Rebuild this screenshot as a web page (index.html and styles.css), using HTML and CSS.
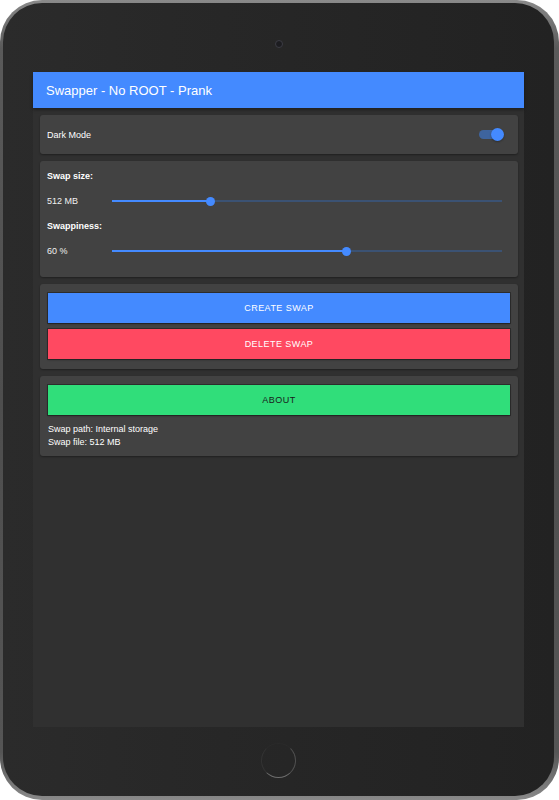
FILE: index.html
```html
<!DOCTYPE html>
<html>
<head>
<meta charset="utf-8">
<link rel="stylesheet" href="styles.css">
</head>
<body>
<div class="tablet">
  <div class="bezel">
    <div class="camera-row"><span class="camera"></span></div>
    <div class="screen">
      <div class="appbar">Swapper - No ROOT - Prank</div>
      <div class="content">
        <div class="card card-toggle">
          <span class="text">Dark Mode</span>
          <span class="switch"></span>
        </div>
        <div class="card card-sliders">
          <div class="label">Swap size:</div>
          <div class="slider-row">
            <span class="value">512 MB</span>
            <div class="track"><div class="fill" style="width:25.2%"></div><span class="thumb" style="left:25.2%"></span></div>
          </div>
          <div class="label">Swappiness:</div>
          <div class="slider-row">
            <span class="value">60 %</span>
            <div class="track"><div class="fill" style="width:60%"></div><span class="thumb" style="left:60%"></span></div>
          </div>
        </div>
        <div class="card card-buttons">
          <div class="btn btn-blue">CREATE SWAP</div>
          <div class="btn btn-red">DELETE SWAP</div>
        </div>
        <div class="card card-about">
          <div class="btn btn-green">ABOUT</div>
          <div class="info">
            <div>Swap path: Internal storage</div>
            <div>Swap file: 512 MB</div>
          </div>
        </div>
      </div>
    </div>
    <div class="home-row"><span class="home"></span></div>
  </div>
</div>
</body>
</html>
```

FILE: styles.css
```css
* { box-sizing: border-box; }
html, body { margin: 0; padding: 0; background: #ffffff; }
body { width: 559px; height: 800px; font-family: "Liberation Sans", Arial, sans-serif; }

.tablet {
  width: 559px;
  height: 800px;
  border-radius: 42px;
  padding: 3px 5px 4px 3px;
  background: linear-gradient(180deg, #8a8a8a 0%, #5a5a5a 6%, #4e4e4e 50%, #555 94%, #8a8a8a 100%);
}

.bezel {
  height: 100%;
  border-radius: 39px;
  background: linear-gradient(90deg, #2b2b2b 0%, #272727 40%, #222222 100%);
  display: grid;
  grid-template-rows: 69px 1fr 69px;
}

.camera-row { display: flex; justify-content: center; align-items: flex-start; padding-top: 37px; }
.camera {
  width: 8px; height: 8px; border-radius: 50%;
  border: 1.5px solid #3c3c44;
  background: #1c1c20;
}

.home-row { display: flex; justify-content: center; align-items: center; padding-bottom: 2px; }
.home {
  width: 35px; height: 35px; border-radius: 50%;
  border: 1.5px solid;
  border-color: #2a2a2a #505050 #6e6e6e #333333;
}

.screen {
  margin: 0 30px;
  background: #303030;
  display: flex;
  flex-direction: column;
}

.appbar {
  height: 36px;
  background: #448aff;
  color: #ffffff;
  font-size: 13px;
  display: flex;
  align-items: center;
  padding-left: 13px;
  box-shadow: 0 2px 3px rgba(0,0,0,0.35);
  position: relative;
  z-index: 1;
}

.content {
  padding: 7px 6px 7px 7px;
  display: flex;
  flex-direction: column;
  gap: 7px;
}

.card {
  background: #424242;
  border-radius: 3px;
  box-shadow: 0 1px 2px rgba(0,0,0,0.35);
  color: #ffffff;
  font-size: 9px;
}

.card-toggle {
  height: 39px;
  display: flex;
  align-items: center;
  justify-content: space-between;
  padding: 0 15px 0 7px;
}

.switch {
  width: 22px;
  height: 9px;
  border-radius: 5px;
  background: #3e649e;
  position: relative;
  margin-right: 2px;
}
.switch::after {
  content: "";
  position: absolute;
  right: -3px;
  top: -2px;
  width: 13px;
  height: 13px;
  border-radius: 50%;
  background: #448aff;
  box-shadow: 0 1px 2px rgba(0,0,0,0.3);
}

.card-sliders {
  padding: 8px 16px 16px 7px;
  display: flex;
  flex-direction: column;
  gap: 8px;
}
.label { height: 14px; line-height: 14px; font-weight: bold; }
.slider-row { height: 20px; display: flex; align-items: center; }
.value { width: 65px; flex: none; color: #f0f0f0; }
.track {
  flex: 1;
  height: 2px;
  background: #3b5273;
  position: relative;
}
.fill { height: 100%; background: #448aff; }
.thumb {
  position: absolute;
  top: 50%;
  width: 9px;
  height: 9px;
  margin: -4.5px 0 0 -4.5px;
  border-radius: 50%;
  background: #448aff;
}

.card-buttons {
  padding: 9px 8px 10px 8px;
  display: flex;
  flex-direction: column;
  gap: 6px;
}
.btn {
  height: 30px;
  display: flex;
  align-items: center;
  justify-content: center;
  font-size: 9px;
  letter-spacing: 0.45px;
  box-shadow: 0 0 0 1px rgba(0,0,0,0.3), 0 1px 2px rgba(0,0,0,0.3);
}
.btn-blue { background: #448aff; color: #ffffff; }
.btn-red { background: #ff4961; color: #ffffff; }
.btn-green { background: #30de7a; color: #1a1a1a; }

.card-about {
  padding: 9px 8px 6px 8px;
  display: flex;
  flex-direction: column;
  gap: 8px;
}
.info { line-height: 13.3px; color: #ffffff; }
```
